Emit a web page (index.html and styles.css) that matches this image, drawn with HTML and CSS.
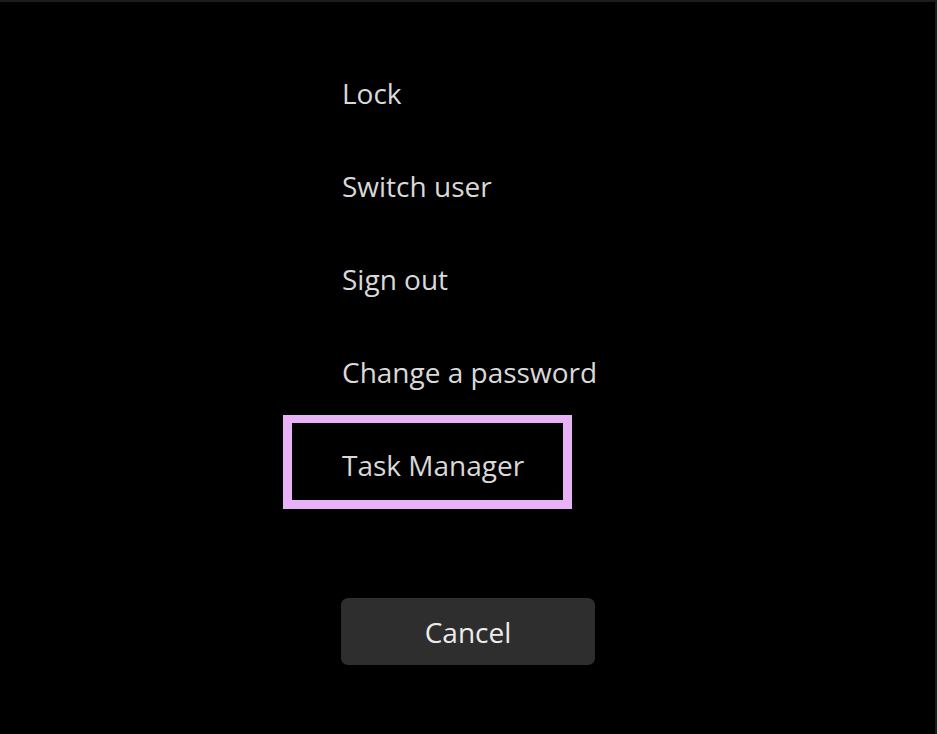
FILE: index.html
```html
<!DOCTYPE html>
<html lang="en">
<head>
    <meta charset="UTF-8">
    <meta name="viewport" content="width=device-width, initial-scale=1.0">
    <title>Security options</title>
    <link rel="stylesheet" href="styles.css">
</head>
<body>
    <div class="screen">
        <ul class="options">
            <li class="option">Lock</li>
            <li class="option">Switch user</li>
            <li class="option">Sign out</li>
            <li class="option">Change a password</li>
            <li class="option highlight">Task Manager</li>
        </ul>
        <button class="cancel">Cancel</button>
    </div>
</body>
</html>
```

FILE: styles.css
```css
html, body {
    margin: 0;
    padding: 0;
    background-color: #000;
}
.screen {
    box-sizing: border-box;
    width: 937px;
    height: 734px;
    padding: 45px 0 0 342px;
    border-top: 2px solid #1c1c1c;
    border-right: 2px solid #1c1c1c;
    font-family: "Open Sans", "Noto Sans", sans-serif;
    color: #d9d9d9;
}
.options {
    list-style: none;
    margin: 0;
    padding: 0;
}
.option {
    height: 93px;
    line-height: 93px;
    font-size: 28px;
}
.highlight {
    box-sizing: border-box;
    width: 289px;
    height: 94px;
    margin: -4px 0 0 -59px;
    padding: 8px 0 0 50px;
    line-height: 68px;
    border: 9px solid #e8b2f6;
    border-top-width: 8px;
}
.cancel {
    display: block;
    width: 254px;
    height: 67px;
    margin: 89px 0 0 -1px;
    border: none;
    border-radius: 7px;
    background-color: #2e2e2e;
    color: #ececec;
    font-family: inherit;
    font-size: 28px;
}
```
